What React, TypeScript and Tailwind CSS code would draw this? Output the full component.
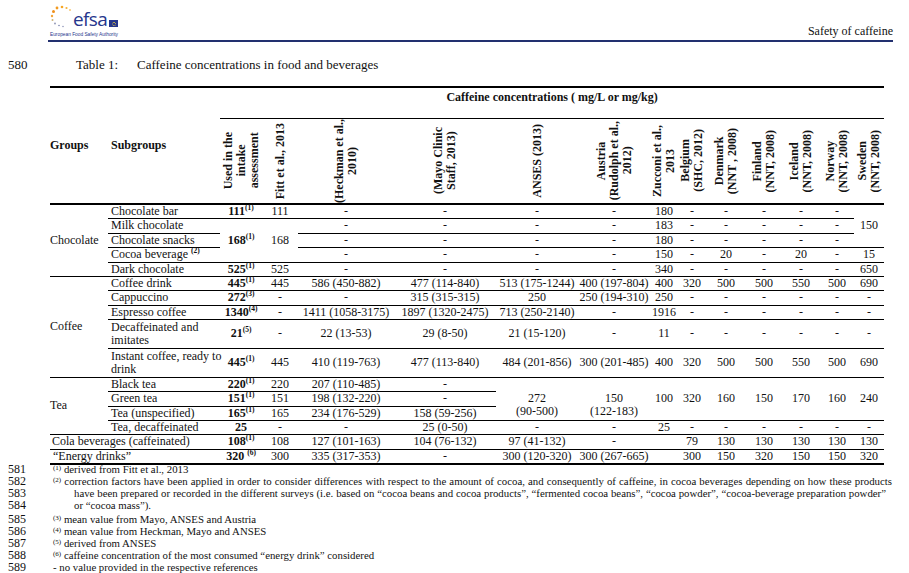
import React from 'react';

// Table 1 page: caffeine concentrations in food and beverages

function Sup({ n, className = '' }: { n: string; className?: string }) {
  return <sup className={`text-[7.5px] font-bold -top-[5px] ${className}`}>({n})</sup>;
}

function FSup({ n }: { n: string }) {
  return <sup className="text-[7px] -top-[3px]">({n})</sup>;
}

type TdProps = { children?: React.ReactNode; rs?: number; line?: boolean; className?: string };

function Td({ children, rs, line = true, className = '' }: TdProps) {
  return (
    <td
      rowSpan={rs}
      className={`p-0 text-center align-middle whitespace-nowrap ${line ? 'border-b border-black' : ''} ${className}`}
    >
      {children}
    </td>
  );
}

function Sub({ children, rs }: { children: React.ReactNode; rs?: number }) {
  return (
    <td rowSpan={rs} className="p-0 pl-[3px] text-left align-middle whitespace-nowrap border-b border-black">
      {children}
    </td>
  );
}

const cells = (arr: string[], extra = '') =>
  arr.map((v, i) => (
    <Td key={i} className={extra}>
      {v}
    </Td>
  ));

function VH({ lines }: { lines: string[] }) {
  return (
    <td className="p-0 align-middle border-b-2 border-black font-bold">
      <div className="flex items-center justify-center">
        <div className="[writing-mode:vertical-rl] rotate-180 text-center leading-[13px] whitespace-nowrap">
          {lines.map((l, i) => (
            <div key={i}>{l}</div>
          ))}
        </div>
      </div>
    </td>
  );
}

function Logo() {
  return (
    <div className="ml-[2px] flex flex-col">
      <div className="flex h-[26px] items-end">
        <svg width="22" height="24" viewBox="0 0 22 24">
          <circle cx="7" cy="3" r="1.4" fill="#f29a1f" />
          <circle cx="12" cy="2" r="1.3" fill="#f6a623" />
          <circle cx="16.5" cy="3" r="1.1" fill="#f6b13a" />
          <circle cx="20" cy="5" r="0.9" fill="#f7c064" />
          <circle cx="3.5" cy="6.5" r="1.5" fill="#ef8f1a" />
          <circle cx="2" cy="11" r="1.2" fill="#f3a53a" />
          <circle cx="2.5" cy="15" r="1" fill="#c9b27a" />
          <circle cx="5" cy="18.5" r="0.9" fill="#8d93b3" />
          <circle cx="9" cy="20.5" r="0.8" fill="#7b84ad" />
          <circle cx="13" cy="21.5" r="0.7" fill="#7b84ad" />
        </svg>
        <span className="ml-[1px] font-['Open_Sans',sans-serif] text-[19px] leading-[19px] tracking-[-0.6px] text-[#26368c]">
          efsa
        </span>
        <span className="mb-[2px] ml-[2px] flex h-[7px] w-[9px] items-center justify-center bg-[#26368c]">
          <span className="h-[4px] w-[4px] rounded-full border-[0.6px] border-dotted border-[#f5d33a]" />
        </span>
      </div>
      <div className="mt-[2px] font-['Liberation_Sans',sans-serif] text-[4.8px] leading-[7px] text-[#26368c]">
        European Food Safety Authority
      </div>
    </div>
  );
}

function FN({ n, children, className = '' }: { n: string; children: React.ReactNode; className?: string }) {
  return (
    <div className={`flex h-[12px] items-baseline ${className}`}>
      <span className="w-[53px] shrink-0 pl-[8px] text-[12px] leading-[12px]">{n}</span>
      {children}
    </div>
  );
}

export default function App() {
  return (
    <div className="h-[573px] w-[909px] overflow-hidden bg-white font-['Liberation_Serif','Times_New_Roman',serif] text-[#111]">
      {/* running header */}
      <header className="ml-[48px] mr-[16px] flex h-[42px] items-end justify-between border-b-[2.5px] border-[#22306f] pb-[2px]">
        <Logo />
        <div className="text-[12px] leading-[14px]">Safety of caffeine</div>
      </header>

      {/* caption */}
      <div className="mt-[15px] flex text-[13px] leading-[15px]">
        <span className="w-[76px] pl-[8px]">580</span>
        <span className="w-[61px]">Table 1:</span>
        <span>Caffeine concentrations in food and beverages</span>
      </div>

      <table className="mt-[14px] ml-[50px] w-[834px] table-fixed border-collapse border-y-2 border-black text-[12px] leading-[13.4px]">
        <colgroup>
          <col className="w-[58px]" />
          <col className="w-[112px]" />
          <col className="w-[42px]" />
          <col className="w-[36px]" />
          <col className="w-[96px]" />
          <col className="w-[102px]" />
          <col className="w-[82px]" />
          <col className="w-[72px]" />
          <col className="w-[28px]" />
          <col className="w-[28px]" />
          <col className="w-[40px]" />
          <col className="w-[36px]" />
          <col className="w-[38px]" />
          <col className="w-[34px]" />
          <col className="w-[30px]" />
        </colgroup>
        <thead>
          <tr className="h-[31px]">
            <th rowSpan={2} className="p-0 text-left align-middle font-bold border-b-2 border-black">
              Groups
            </th>
            <th rowSpan={2} className="p-0 pl-[3px] text-left align-middle font-bold border-b-2 border-black">
              Subgroups
            </th>
            <th colSpan={13} className="p-0 pt-[3px] text-center align-top font-bold border-b border-black">
              Caffeine concentrations ( mg/L or mg/kg)
            </th>
          </tr>
          <tr className="h-[86px]">
            <VH lines={['Used in the', 'intake', 'assessment']} />
            <VH lines={['Fitt et al., 2013']} />
            <VH lines={['(Heckman et al.,', '2010)']} />
            <VH lines={['(Mayo Clinic', 'Staff, 2013)']} />
            <VH lines={['ANSES (2013)']} />
            <VH lines={['Austria', '(Rudolph et al.,', '2012)']} />
            <VH lines={['Zucconi et al.,', '2013']} />
            <VH lines={['Belgium', '(SHC, 2012)']} />
            <VH lines={['Denmark', '(NNT , 2008)']} />
            <VH lines={['Finland', '(NNT, 2008)']} />
            <VH lines={['Iceland', '(NNT, 2008)']} />
            <VH lines={['Norway', '(NNT, 2008)']} />
            <VH lines={['Sweden', '(NNT, 2008)']} />
          </tr>
        </thead>
        <tbody>
          {/* Chocolate */}
          <tr className="h-[14.4px]">
            <Td rs={5} className="text-left">
              Chocolate
            </Td>
            <Sub>Chocolate bar</Sub>
            <Td className="font-bold">
              111<Sup n="1" />
            </Td>
            {cells(['111', '-', '-', '-', '-', '180', '-', '-', '-', '-', '-'])}
            <Td rs={3}>150</Td>
          </tr>
          <tr className="h-[14.4px]">
            <Sub>Milk chocolate</Sub>
            <Td rs={3} className="font-bold">
              168<Sup n="1" />
            </Td>
            <Td rs={3}>168</Td>
            {cells(['-', '-', '-', '-', '183', '-', '-', '-', '-', '-'])}
          </tr>
          <tr className="h-[14.4px]">
            <Sub>Chocolate snacks</Sub>
            {cells(['-', '-', '-', '-', '180', '-', '-', '-', '-', '-'])}
          </tr>
          <tr className="h-[14.4px]">
            <Sub>
              Cocoa beverage <Sup n="2" />
            </Sub>
            {cells(['-', '-', '-', '-', '150', '-', '20', '-', '20', '-', '15'])}
          </tr>
          <tr className="h-[14.4px]">
            <Sub>Dark chocolate</Sub>
            <Td className="font-bold">
              525<Sup n="1" />
            </Td>
            {cells(['525', '-', '-', '-', '-', '340', '-', '-', '-', '-', '-', '650'])}
          </tr>

          {/* Coffee */}
          <tr className="h-[14.4px]">
            <Td rs={5} className="text-left">
              Coffee
            </Td>
            <Sub>Coffee drink</Sub>
            <Td className="font-bold">
              445<Sup n="1" />
            </Td>
            {cells(['445', '586 (450-882)', '477 (114-840)', '513 (175-1244)', '400 (197-804)', '400', '320', '500', '500', '550', '500', '690'])}
          </tr>
          <tr className="h-[14.4px]">
            <Sub>Cappuccino</Sub>
            <Td className="font-bold">
              272<Sup n="3" />
            </Td>
            {cells(['-', '-', '315 (315-315)', '250', '250 (194-310)', '250', '-', '-', '-', '-', '-', '-'])}
          </tr>
          <tr className="h-[14.4px]">
            <Sub>Espresso coffee</Sub>
            <Td className="font-bold">
              1340<Sup n="4" />
            </Td>
            {cells(['-', '1411 (1058-3175)', '1897 (1320-2475)', '713 (250-2140)', '-', '1916', '-', '-', '-', '-', '-', '-'])}
          </tr>
          <tr className="h-[28.8px]">
            <Sub>
              Decaffeinated and
              <br />
              imitates
            </Sub>
            <Td className="font-bold">
              21<Sup n="5" />
            </Td>
            {cells(['-', '22 (13-53)', '29 (8-50)', '21 (15-120)', '-', '11', '-', '-', '-', '-', '-', '-'])}
          </tr>
          <tr className="h-[28.8px]">
            <Sub>
              Instant coffee, ready to
              <br />
              drink
            </Sub>
            <Td className="font-bold">
              445<Sup n="1" />
            </Td>
            {cells(['445', '410 (119-763)', '477 (113-840)', '484 (201-856)', '300 (201-485)', '400', '320', '500', '500', '550', '500', '690'])}
          </tr>

          {/* Tea */}
          <tr className="h-[14.4px]">
            <Td rs={4} className="text-left">
              Tea
            </Td>
            <Sub>Black tea</Sub>
            <Td className="font-bold">
              220<Sup n="1" />
            </Td>
            {cells(['220', '207 (110-485)', '-'])}
            <Td rs={3} className="pt-[13px]">
              272
              <br />
              (90-500)
            </Td>
            <Td rs={3} className="pt-[13px]">
              150
              <br />
              (122-183)
            </Td>
            {['100', '320', '160', '150', '170', '160', '240'].map((v, i) => (
              <Td key={i} rs={3}>
                {v}
              </Td>
            ))}
          </tr>
          <tr className="h-[14.4px]">
            <Sub>Green tea</Sub>
            <Td className="font-bold">
              151<Sup n="1" />
            </Td>
            {cells(['151', '198 (132-220)', '-'])}
          </tr>
          <tr className="h-[14.4px]">
            <Sub>Tea (unspecified)</Sub>
            <Td className="font-bold">
              165<Sup n="1" />
            </Td>
            {cells(['165', '234 (176-529)', '158 (59-256)'])}
          </tr>
          <tr className="h-[14.4px]">
            <Sub>Tea, decaffeinated</Sub>
            <Td className="font-bold">25</Td>
            {cells(['-', '-', '25 (0-50)', '-', '-', '25', '-', '-', '-', '-', '-', '-'])}
          </tr>

          {/* Cola and energy drinks */}
          <tr className="h-[14.4px]">
            <td colSpan={2} className="p-0 pl-[2px] text-left align-middle whitespace-nowrap border-b border-black">
              Cola beverages (caffeinated)
            </td>
            <Td className="font-bold">
              108<Sup n="1" />
            </Td>
            {cells(['108', '127 (101-163)', '104 (76-132)', '97 (41-132)', '-', '', '79', '130', '130', '130', '130', '130'])}
          </tr>
          <tr className="h-[14.4px]">
            <td colSpan={2} className="p-0 pl-[3px] text-left align-middle whitespace-nowrap">
              “Energy drinks”
            </td>
            <Td line={false} className="font-bold">
              320 <Sup n="6" />
            </Td>
            {['300', '335 (317-353)', '-', '300 (120-320)', '300 (267-665)', '', '300', '150', '320', '150', '150', '320'].map(
              (v, i) => (
                <Td key={i} line={false}>
                  {v}
                </Td>
              )
            )}
          </tr>
        </tbody>
      </table>

      {/* footnotes */}
      <div className="-mt-[2px] text-[10.8px] leading-[12px]">
        <FN n="581">
          <span>
            <FSup n="1" /> derived from Fitt et al., 2013
          </span>
        </FN>
        <FN n="582">
          <span className="w-[839px] whitespace-nowrap [text-align-last:justify]">
            <FSup n="2" /> correction factors have been applied in order to consider differences with respect to the amount
            of cocoa, and consequently of caffeine, in cocoa beverages depending on how these products
          </span>
        </FN>
        <FN n="583">
          <span className="ml-[21px] w-[812px] whitespace-nowrap [text-align-last:justify]">
            have been prepared or recorded in the different surveys (i.e. based on “cocoa beans and cocoa products”,
            “fermented cocoa beans”, “cocoa powder”, “cocoa-beverage preparation powder”
          </span>
        </FN>
        <FN n="584">
          <span className="ml-[21px]">or “cocoa mass”).</span>
        </FN>
        <FN n="585" className="mt-[2px]">
          <span>
            <FSup n="3" /> mean value from Mayo, ANSES and Austria
          </span>
        </FN>
        <FN n="586">
          <span>
            <FSup n="4" /> mean value from Heckman, Mayo and ANSES
          </span>
        </FN>
        <FN n="587">
          <span>
            <FSup n="5" /> derived from ANSES
          </span>
        </FN>
        <FN n="588">
          <span>
            <FSup n="6" /> caffeine concentration of the most consumed “energy drink” considered
          </span>
        </FN>
        <FN n="589">
          <span>- no value provided in the respective references</span>
        </FN>
      </div>
    </div>
  );
}
